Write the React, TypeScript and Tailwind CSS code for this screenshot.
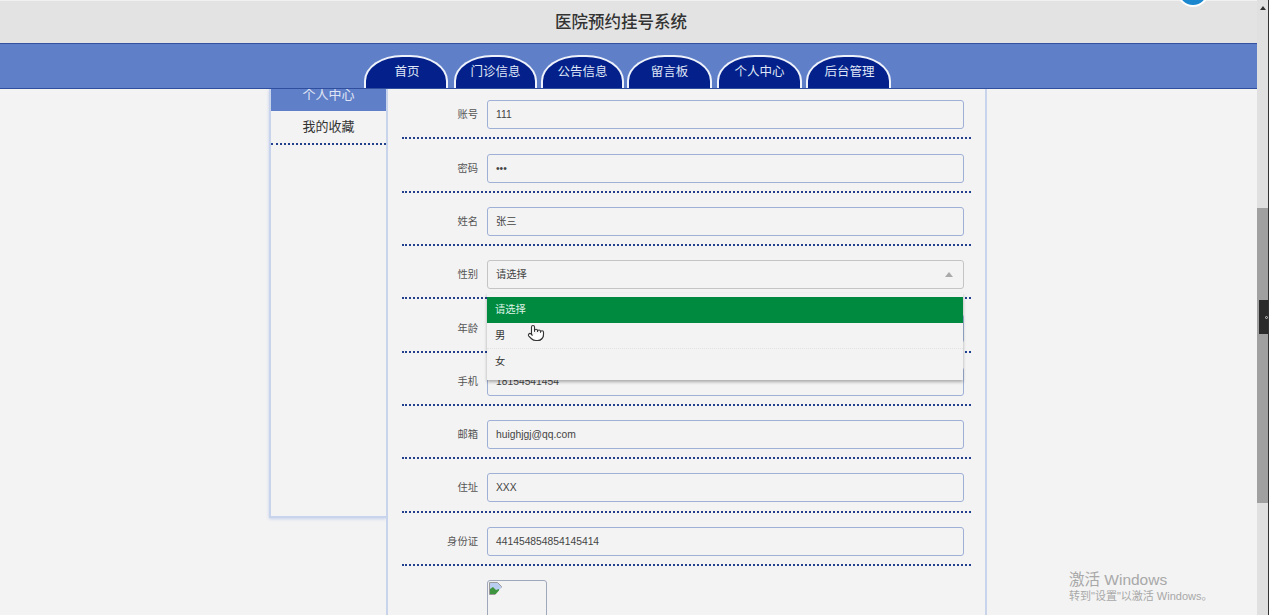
import { Pointer } from "lucide-react";

const font = "font-['Liberation_Sans','Noto_Sans_CJK_SC',sans-serif]";

const tabs = [
  { label: "首页", cls: "w-[84px] pl-[2px]" },
  { label: "门诊信息", cls: "w-[83px] ml-[6px]" },
  { label: "公告信息", cls: "w-[83px] ml-[4px]" },
  { label: "留言板", cls: "w-[85px] ml-[3px]" },
  { label: "个人中心", cls: "w-[85px] ml-[5px]" },
  { label: "后台管理", cls: "w-[85px] ml-[4px] pl-[2px]" },
];

const rows = [
  { label: "账号", value: "111" },
  { label: "密码", value: "•••" },
  { label: "姓名", value: "张三" },
  { label: "性别", value: "请选择", select: true },
  { label: "年龄", value: "" },
  { label: "手机", value: "18154541454" },
  { label: "邮箱", value: "huighjgj@qq.com" },
  { label: "住址", value: "XXX" },
  { label: "身份证", value: "441454854854145414" },
];

function Row({ label, value, select }: { label: string; value: string; select?: boolean }) {
  return (
    <div className="mx-[14px] h-[53.33px] shrink-0 border-b-[2px] border-dotted border-[#23408f] flex items-start pt-[14.2px]">
      <div className="w-[85px] pr-[9px] h-[29px] leading-[29px] text-right text-[10.3px] text-[#555]">{label}</div>
      <div
        className={`w-[477px] h-[29px] leading-[27px] pl-[8px] pr-[9px] rounded-[3px] border text-[10.3px] text-[#444] flex justify-between items-center ${
          select ? "border-[#c4c4c4]" : "border-[#9fb0d6]"
        }`}
      >
        {value}
        {select && <span className="mr-[1px] w-0 h-0 border-x-[4px] border-x-transparent border-b-[5px] border-b-[#aaa]" />}
      </div>
    </div>
  );
}

function BrokenImage() {
  return (
    <svg width="13" height="13" viewBox="0 0 13 13" className="m-[1px]">
      <path d="M0.5 0.5h8l4 4v8h-12z" fill="#b9cdf0" stroke="#9a9a9a" />
      <path d="M1 7l3-2 3 3 3-1v5H1z" fill="#3f9440" />
      <path d="M6 13l7-8v8z" fill="#f3f3f3" />
    </svg>
  );
}

export default function App() {
  return (
    <div className={`${font} relative flex w-[1269px] h-[615px] overflow-hidden bg-[#f3f3f3]`}>
      <div className="flex flex-col w-[1257px] h-full">
        <header className="relative shrink-0 h-[44px] bg-[#e3e3e3] border-t border-t-[#f1f1f1] border-b-[1px] border-b-[#34529f] flex items-center justify-center text-[16.5px] font-medium text-[#333]">
          <span className="-ml-[15px]">医院预约挂号系统</span>
          <div className="absolute left-[1177px] -top-[26px] w-[32px] h-[32px] rounded-full bg-[#1b87cf] border-[2px] border-white" />
        </header>
        <nav className="relative z-10 shrink-0 h-[45px] bg-[#5f7fc8] border-b border-b-[#2f4e9e] flex items-end pl-[364px]">
          {tabs.map((t) => (
            <div
              key={t.label}
              className={`${t.cls} h-[33px] bg-[#04208a] border-x-[2px] border-t-[2px] border-[#eef2fb] rounded-[38px_38px_0_0/26px_26px_0_0] text-center text-[12.5px] leading-[30px] text-[#dfe6f7]`}
            >
              {t.label}
            </div>
          ))}
        </nav>
        <main className="flex-1 min-h-0 flex items-start pl-[269px]">
          <aside className="w-[117px] h-[429px] shrink-0 flex flex-col bg-[#f3f3f3] border-l-[2px] border-b-[2px] border-[#c8d3ec] shadow-[0_1px_3px_#c5d0ea]">
            <div className="h-[22px] bg-[#5f7fc8] text-white/80 text-center text-[13px] leading-[12px]">个人中心</div>
            <div className="h-[34px] border-b-[2px] border-dotted border-[#23408f] text-center text-[13px] leading-[32px] text-[#333]">我的收藏</div>
          </aside>
          <section className="relative w-[601px] h-[529px] -mt-[3px] shrink-0 flex flex-col border-x-[2px] border-[#c8d3ec] bg-[#f3f3f3]">
            {rows.map((r) => (
              <Row key={r.label} {...r} />
            ))}
            <div className="ml-[99px] mt-[14px] w-[60px] h-[60px] shrink-0 rounded-[3px] border border-[#9fa8ba]">
              <BrokenImage />
            </div>
            <div className="absolute left-[99px] top-[207px] w-[476px] h-[87px] pt-[4px] bg-[#f3f3f3] shadow-[0_2px_3px_rgba(0,0,0,0.3)] text-[10.3px] text-[#333]">
              <div className="h-[26px] leading-[26px] pl-[8px] bg-[#008a40] text-[#dff3e6]">请选择</div>
              <div className="h-[26px] leading-[26px] pl-[8px] border-b border-dotted border-[#e2e2e2]">男</div>
              <div className="h-[26px] leading-[26px] pl-[8px]">女</div>
            </div>
            <Pointer
              size={18}
              strokeWidth={1.5}
              className="absolute left-[139px] top-[238px] fill-white text-[#333]"
            />
          </section>
        </main>
      </div>

      <div className="relative w-[11px] h-full bg-[#e0e0e0] flex flex-col items-center">
        <span className="mt-[6px] w-0 h-0 border-x-[3px] border-x-transparent border-b-[4px] border-b-[#333]" />
        <div className="mt-[198px] w-full h-[295px] bg-[#a0a0a0]" />
        <div className="absolute right-0 top-[300px] w-[9px] h-[34px] bg-[#2b2b2b] flex items-center justify-end">
          <span className="w-[3px] h-[3px] rounded-full border border-[#ccc]" />
        </div>
      </div>
      <div className="w-px h-full bg-[#333]" />

      <div className="absolute left-[1069px] top-[570px] text-[#a8a8a8]">
        <div className="text-[15.5px] leading-[19px]">激活 Windows</div>
        <div className="text-[11px] leading-[14px]">转到"设置"以激活 Windows。</div>
      </div>
    </div>
  );
}
